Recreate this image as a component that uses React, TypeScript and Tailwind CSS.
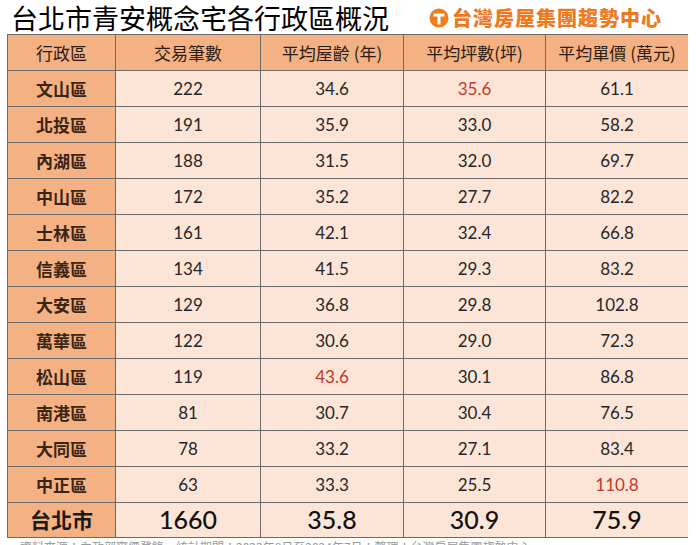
const rows: [string, string, string, string, string, number?][] = [
  ["文山區", "222", "34.6", "35.6", "61.1", 3],
  ["北投區", "191", "35.9", "33.0", "58.2"],
  ["內湖區", "188", "31.5", "32.0", "69.7"],
  ["中山區", "172", "35.2", "27.7", "82.2"],
  ["士林區", "161", "42.1", "32.4", "66.8"],
  ["信義區", "134", "41.5", "29.3", "83.2"],
  ["大安區", "129", "36.8", "29.8", "102.8"],
  ["萬華區", "122", "30.6", "29.0", "72.3"],
  ["松山區", "119", "43.6", "30.1", "86.8", 2],
  ["南港區", "81", "30.7", "30.4", "76.5"],
  ["大同區", "78", "33.2", "27.1", "83.4"],
  ["中正區", "63", "33.3", "25.5", "110.8", 4],
];

const headers = ["交易筆數", "平均屋齡 (年)", "平均坪數(坪)", "平均單價 (萬元)"];
const totals = ["1660", "35.8", "30.9", "75.9"];

function Logo() {
  return (
    <div className="flex items-center gap-[3px]">
      <svg width="20" height="20" viewBox="0 0 20 20">
        <circle cx="10" cy="10" r="9.5" fill="#ef7d22" />
        <path d="M4.5 5.5h11v3h-4v8h-3v-8h-4z" fill="#fff" />
      </svg>
      <span className="font-['Noto_Sans_CJK_TC',sans-serif] text-[20px] font-black leading-none tracking-[1px] text-[#ee7a1f]">
        台灣房屋集團趨勢中心
      </span>
    </div>
  );
}

export default function App() {
  return (
    <div className="w-[700px] h-[545px] overflow-hidden bg-white font-['Noto_Sans_CJK_TC',sans-serif]">
      <div className="flex items-center h-[34px] pl-[11px]">
        <h1 className="text-[27px] leading-none text-black font-normal">
          台北市青安概念宅各行政區概況
        </h1>
        <div className="ml-[40px] mt-[1px]">
          <Logo />
        </div>
      </div>

      <div className="ml-[7px] w-[681px] border border-[#6b6b6b] grid grid-cols-[108px_145px_143px_142px_142px]">
        <div className="h-[36px] flex items-center justify-center bg-[#f4b183] border-r border-b border-[#6b6b6b] text-[17px] text-[#2b1d12]">
          行政區
        </div>
        {headers.map((h, i) => (
          <div
            key={h}
            className={`h-[36px] flex items-center justify-center bg-[#f4b183] border-b border-[#6b6b6b] text-[17px] text-[#2b1d12] ${
              i < 3 ? "border-r" : ""
            }`}
          >
            {h}
          </div>
        ))}

        {rows.map((r) => (
          <div key={r[0]} className="contents">
            <div className="h-[36px] flex items-center justify-center bg-[#f4b183] border-r border-b border-[#6b6b6b] text-[17px] font-bold text-[#3a2514]">
              {r[0]}
            </div>
            {[r[1], r[2], r[3], r[4]].map((v, i) => (
              <div
                key={i}
                className={`h-[36px] flex items-center justify-center bg-[#fce4d6] border-b border-[#6b6b6b] font-['Lato',sans-serif] text-[17px] ${
                  i < 3 ? "border-r" : ""
                } ${r[5] === i + 1 ? "text-[#c0392b]" : "text-[#262626]"}`}
              >
                {v}
              </div>
            ))}
          </div>
        ))}

        <div className="h-[34px] flex items-center justify-center bg-[#f4b183] border-r border-[#6b6b6b] text-[21px] font-bold text-[#1a1a1a]">
          台北市
        </div>
        {totals.map((v, i) => (
          <div
            key={v}
            className={`h-[34px] flex items-center justify-center bg-[#fce4d6] font-['Lato',sans-serif] text-[25px] font-medium text-[#111] ${
              i < 3 ? "border-r border-[#6b6b6b]" : ""
            }`}
          >
            {v}
          </div>
        ))}
      </div>

      <div className="pl-[20px] mt-[3px] text-[12px] leading-none text-[#9a9a9a] whitespace-nowrap">
        資料來源：內政部實價登錄，統計期間：2023年8月至2024年7月；整理：台灣房屋集團趨勢中心
      </div>
    </div>
  );
}
